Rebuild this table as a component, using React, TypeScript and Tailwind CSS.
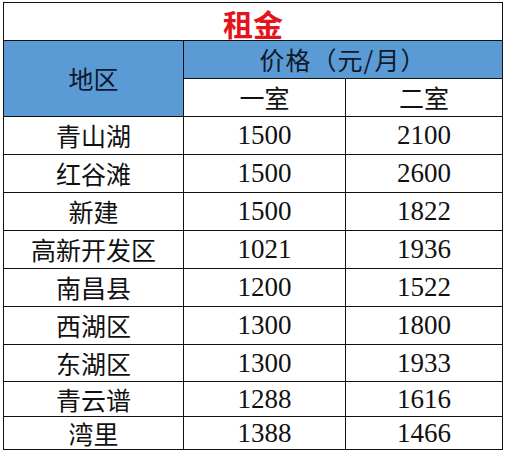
const rows: [string, string, string][] = [
  ["青山湖", "1500", "2100"],
  ["红谷滩", "1500", "2600"],
  ["新建", "1500", "1822"],
  ["高新开发区", "1021", "1936"],
  ["南昌县", "1200", "1522"],
  ["西湖区", "1300", "1800"],
  ["东湖区", "1300", "1933"],
  ["青云谱", "1288", "1616"],
  ["湾里", "1388", "1466"],
]

const heights = ["h-[38px]", "h-[38px]", "h-[38px]", "h-[38px]", "h-[38px]", "h-[38px]", "h-[37px]", "h-[35px]", "h-[33px]"]

const cjk = "font-['Noto_Sans_CJK_SC',sans-serif]"
const num = "font-['Liberation_Serif','Noto_Sans_CJK_SC',serif]"
const cell = "border-[1.5px] border-[#111] p-0 leading-none"

export default function App() {
  return (
    <div className="w-[506px] h-[455px] bg-white pt-[2px] pl-[3px]">
      <table className="w-[499px] table-fixed border-collapse text-center text-[#111]">
        <colgroup>
          <col className="w-[180px]" />
          <col className="w-[162px]" />
          <col className="w-[157px]" />
        </colgroup>
        <tbody>
          <tr className="h-[38px]">
            <td colSpan={3} className={`${cell} pt-[2px] text-[30px] font-bold text-[#e3141b] ${cjk}`}>
              租金
            </td>
          </tr>
          <tr className="h-[38px]">
            <td rowSpan={2} className={`${cell} bg-[#5b9bd5] text-[25px] text-[#10182a] ${cjk}`}>
              地区
            </td>
            <td colSpan={2} className={`${cell} bg-[#5b9bd5] text-[25px] tracking-[1px] text-[#10182a] ${cjk}`}>
              价格（元/月）
            </td>
          </tr>
          <tr className="h-[38px]">
            <td className={`${cell} text-[25px] ${cjk}`}>一室</td>
            <td className={`${cell} text-[25px] ${cjk}`}>二室</td>
          </tr>
          {rows.map(([area, one, two], i) => (
            <tr key={area} className={heights[i]}>
              <td className={`${cell} text-[25px] ${cjk}`}>{area}</td>
              <td className={`${cell} text-[27px] ${num}`}>{one}</td>
              <td className={`${cell} text-[27px] ${num}`}>{two}</td>
            </tr>
          ))}
        </tbody>
      </table>
    </div>
  )
}
